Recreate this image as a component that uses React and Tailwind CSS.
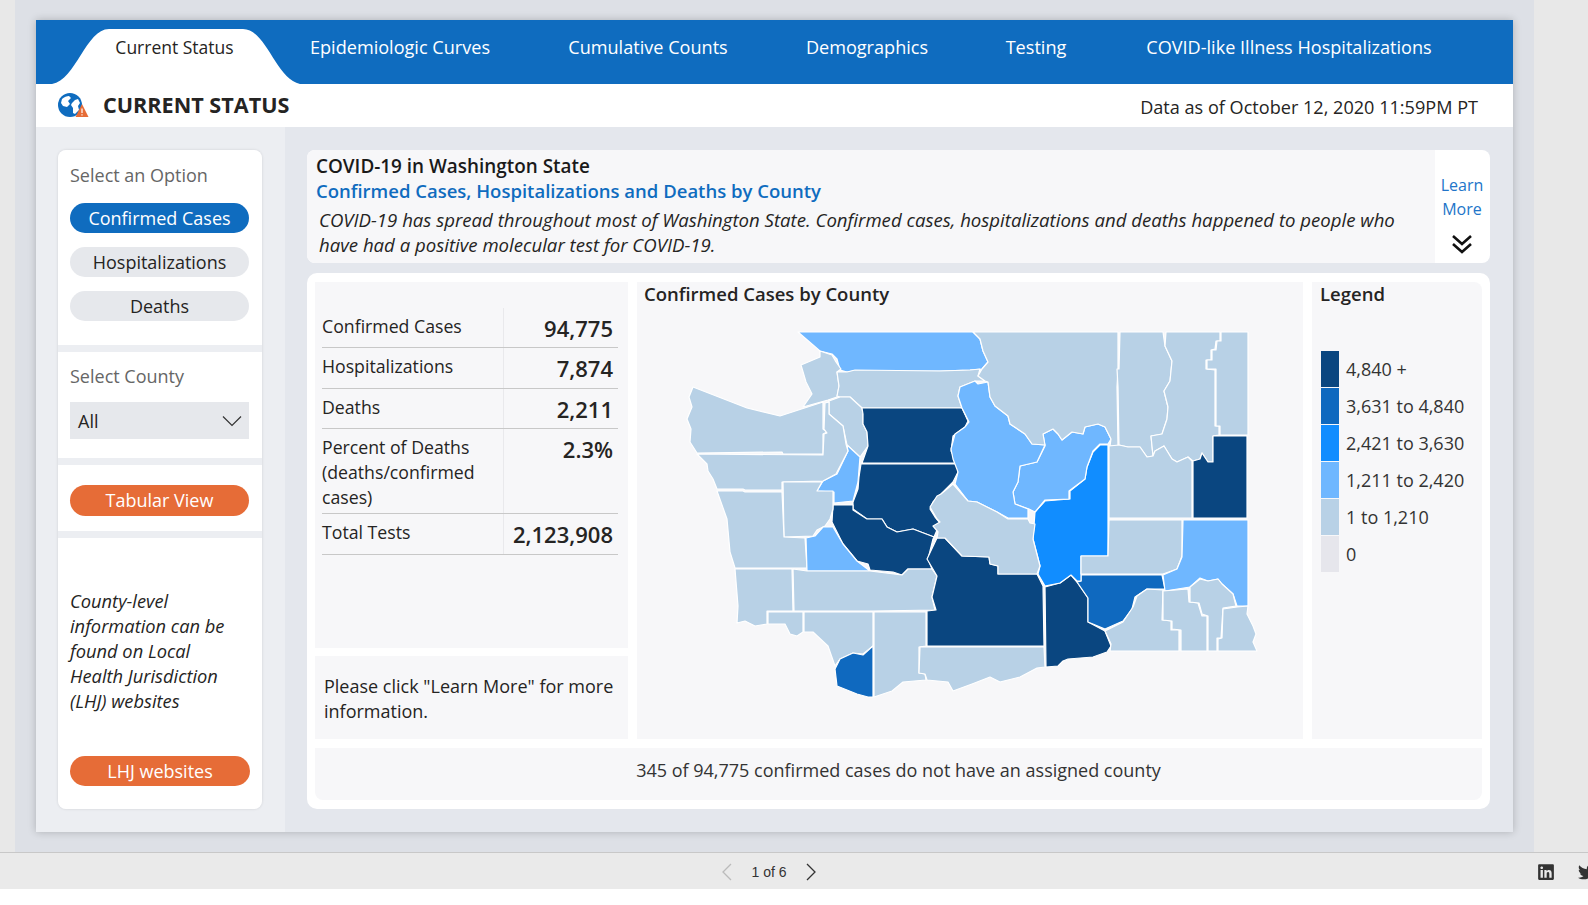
import { FaLinkedin, FaTwitter } from "react-icons/fa";

const DARK = "#0a4680";
const MID = "#0f69bf";
const BRIGHT = "#118dff";
const LIGHT = "#6fb7ff";
const PALE = "#b8d1e6";

const counties = [
  [LIGHT, "798,333 973,333 980,340 983,352 988,363 982,370 970,371 940,372 853,372 847,373 840,371 837,360 832,355 820,352"],
  [PALE, "801,366 820,358 820,352 832,356 836,363 841,370 837,373 839,387 837,398 828,401 803,408 812,395 806,383"],
  [PALE, "837,373 847,373 855,371 940,372 970,371 980,370 978,377 985,382 975,382 960,388 958,397 962,409 862,409 850,398 840,398 837,397 839,387"],
  [PALE, "829,402 840,398 850,398 862,409 863,415 863,425 867,433 868,447 860,458 847,446 843,427 829,415"],
  [DARK, "862,409 962,409 968,422 965,428 953,437 951,452 957,464 862,464 868,447 867,433 863,425 863,415"],
  [DARK, "861,465 957,465 958,473 953,483 941,495 933,503 930,510 935,518 940,524 934,538 913,530 897,533 887,528 882,520 867,520 853,510 853,503 858,490 859,478"],
  [DARK, "833,506 853,506 853,511 867,520 882,520 887,528 897,533 913,530 934,538 933,540 928,560 932,570 908,570 902,576 893,573 870,571 868,565 857,562 843,545 832,523"],
  [LIGHT, "847,446 860,458 858,483 853,502 834,504 834,493 817,492 823,482 837,475 848,452"],
  [PALE, "693,388 747,409 780,417 823,403 823,430 827,433 823,435 823,455 783,455 782,453 697,454 690,443 691,430 687,420 692,408 689,398"],
  [PALE, "697,455 823,456 824,435 827,434 824,430 825,404 829,403 829,415 843,427 846,445 848,452 836,475 823,482 782,483 782,491 745,491 743,490 717,490 713,480 708,472 707,465"],
  [PALE, "783,483 822,483 817,492 833,492 833,510 830,520 825,527 817,531 813,537 784,538"],
  [PALE, "717,492 743,492 745,493 782,493 784,538 805,539 807,569 735,569 730,553 727,520"],
  [LIGHT, "806,539 815,537 823,528 833,528 843,545 857,562 870,572 807,572"],
  [PALE, "735,570 792,570 793,612 767,612 767,625 755,627 745,622 737,624 738,607"],
  [PALE, "793,570 807,572 870,572 902,576 908,570 932,570 937,577 932,598 935,611 873,612 794,612"],
  [PALE, "768,613 803,613 803,633 797,637 790,635 785,625 768,625"],
  [PALE, "804,613 873,613 873,647 863,655 853,654 840,660 835,667 828,647 813,633 804,633"],
  [MID, "873,647 873,698 868,698 857,695 837,687 835,670 840,660 853,654 863,656"],
  [PALE, "874,613 926,613 926,647 919,648 919,674 925,675 926,681 903,683 892,692 874,698"],
  [DARK, "927,612 936,611 932,598 937,577 927,560 937,539 945,539 962,557 989,558 990,565 998,567 998,575 1037,575 1043,587 1044,647 927,647"],
  [PALE, "920,648 1044,648 1045,668 1037,669 1020,678 1000,683 990,678 972,685 953,692 948,683 927,681 925,675 919,674"],
  [DARK, "1045,588 1060,584 1071,576 1077,583 1088,599 1088,623 1105,632 1111,647 1107,653 1093,658 1068,660 1063,662 1058,667 1046,668"],
  [MID, "1081,576 1162,576 1165,590 1147,590 1135,598 1132,610 1123,622 1105,630 1088,623 1088,599 1077,583 1081,582"],
  [BRIGHT, "1108,446 1108,557 1081,557 1081,582 1077,582 1071,576 1060,584 1045,587 1038,575 1040,567 1033,540 1035,513 1045,502 1070,500 1070,492 1085,480 1087,468 1093,453 1100,446"],
  [LIGHT, "1100,445 1093,452 1087,468 1085,480 1069,492 1069,500 1045,501 1035,513 1029,510 1015,505 1013,493 1018,483 1020,467 1037,463 1045,447 1043,435 1053,430 1058,435 1062,441 1072,433 1083,435 1085,428 1098,425 1105,428 1111,440 1108,445"],
  [LIGHT, "960,388 975,382 978,385 988,383 990,398 995,407 1008,417 1010,425 1025,435 1032,445 1045,446 1037,463 1020,467 1018,483 1013,493 1015,505 1028,510 1028,519 1008,519 997,513 977,503 968,502 955,485 958,473 953,460 951,450 955,435 965,428 969,423 962,409 958,397"],
  [PALE, "953,485 968,502 977,503 997,513 1008,520 1028,520 1030,524 1035,525 1033,540 1040,567 1037,575 998,575 998,567 990,565 989,558 962,557 945,539 937,539 938,533 933,527 940,523 937,520 930,508 937,497 941,495"],
  [PALE, "982,333 1118,333 1118,370 1117,388 1118,447 1110,447 1111,440 1105,428 1098,425 1085,428 1083,435 1072,433 1062,441 1058,435 1053,430 1043,435 1045,446 1032,445 1025,435 1010,425 1008,417 995,407 990,398 988,383 985,382 978,377 982,370 988,363 983,352 980,340 973,333"],
  [PALE, "1120,333 1163,333 1165,347 1172,362 1170,382 1164,392 1168,408 1167,420 1162,435 1151,437 1153,457 1147,458 1140,448 1128,448 1119,446 1118,388 1117,370 1119,370"],
  [PALE, "1166,333 1220,333 1220,342 1216,342 1215,350 1211,351 1211,361 1206,361 1206,370 1215,371 1215,427 1219,427 1219,436 1213,437 1213,463 1208,463 1202,454 1200,460 1193,462 1188,458 1177,463 1172,460 1164,447 1155,452 1153,457 1151,437 1162,435 1167,420 1168,408 1164,392 1170,382 1172,362 1165,347"],
  [PALE, "1221,333 1248,333 1248,436 1220,436 1220,427 1216,427 1216,370 1207,370 1207,361 1212,361 1212,351 1216,351 1217,342 1221,342"],
  [DARK, "1213,437 1247,437 1247,519 1193,519 1193,462 1200,460 1202,454 1208,463 1213,463"],
  [PALE, "1109,447 1119,446 1128,448 1140,448 1147,458 1153,457 1155,452 1164,447 1172,460 1177,463 1188,458 1192,462 1192,519 1109,519"],
  [PALE, "1109,521 1182,521 1182,557 1177,570 1163,575 1081,575 1081,557 1108,557"],
  [LIGHT, "1183,521 1248,521 1248,607 1237,607 1233,595 1222,585 1218,580 1208,582 1200,579 1190,588 1165,592 1163,576 1177,570 1182,558"],
  [PALE, "1105,632 1123,623 1133,608 1137,597 1147,590 1163,591 1162,621 1171,622 1171,631 1179,631 1179,652 1110,652 1111,645"],
  [PALE, "1163,592 1188,590 1189,603 1198,604 1202,617 1207,617 1207,652 1181,652 1181,631 1172,630 1172,622 1163,621"],
  [PALE, "1190,588 1200,580 1208,582 1218,580 1222,585 1233,595 1236,607 1223,609 1221,639 1217,639 1217,652 1208,652 1208,617 1202,615 1199,604 1190,603"],
  [PALE, "1223,610 1237,608 1248,607 1247,615 1253,627 1256,635 1253,643 1257,652 1218,652 1218,640 1222,639"],
];

const legend = [
  [DARK, "4,840 +"],
  [MID, "3,631 to 4,840"],
  [BRIGHT, "2,421 to 3,630"],
  [LIGHT, "1,211 to 2,420"],
  [PALE, "1 to 1,210"],
  ["#e6e6ec", "0"],
];

const stats = [
  ["Confirmed Cases", "94,775", "h-[40px]"],
  ["Hospitalizations", "7,874", "h-[41px]"],
  ["Deaths", "2,211", "h-[40px]"],
  ["Percent of Deaths (deaths/confirmed cases)", "2.3%", "h-[85px]"],
  ["Total Tests", "2,123,908", "h-[41px]"],
];

const tabs = [
  ["Epidemiologic Curves", "w-[206px]"],
  ["Cumulative Counts", "w-[290px]"],
  ["Demographics", "w-[148px]"],
  ["Testing", "w-[190px]"],
  ["COVID-like Illness Hospitalizations", "w-[316px]"],
];

function GlobeIcon() {
  return (
    <svg width="32" height="26" viewBox="0 0 32 26">
      <circle cx="13" cy="13" r="12" fill="#0f6cbf" />
      <path d="M5 7c2-2 5-3 7-3l2 2-3 3 2 3-3 3-4-1-2-3zM15 11l3-3 3-1 2 4-2 3 1 4-4 4-2-1 0-5-2-3z" fill="#fff" />
      <path d="M25 12l6.5 13h-13z" fill="#e66c37" />
      <path d="M25 16.5v4.5M25 22.2v1.3" stroke="#fff" strokeWidth="1.2" />
    </svg>
  );
}

function App() {
  return (
    <div className="flex h-screen w-full flex-col overflow-hidden bg-white font-['Open_Sans',sans-serif] text-[#252423]">
      <div className="flex h-[852px] bg-[#e8e8e8]">
        <div className="ml-[15px] h-full w-[1519px] bg-[#dde0e6] pl-[21px] pt-[20px]">
          <div className="flex h-[812px] w-[1477px] flex-col bg-white shadow-[0_0_8px_rgba(0,0,0,0.22)]">
            {/* Tabs */}
            <div className="flex h-[64px] shrink-0 items-end bg-[#0f6cbf] pl-[16px] text-white">
              <div className="relative flex h-[55px] w-[245px] justify-center pt-[5px] text-[17.5px] text-[#252423]">
                <svg className="absolute left-0 top-0" width="248" height="55" viewBox="0 0 248 55">
                  <path d="M0 55C24 51 34 0 57 0H191C214 0 224 50 248 55Z" fill="#fff" />
                </svg>
                <span className="relative">Current Status</span>
              </div>
              {tabs.map(([label, width]) => (
                <div key={label} className={`${width} flex h-[55px] justify-center pt-[5px] text-[18.1px]`}>
                  {label}
                </div>
              ))}
            </div>

            {/* Title row */}
            <div className="flex h-[43px] shrink-0 items-center justify-between pl-[21px] pr-[35px]">
              <div className="flex items-center gap-[14px]">
                <GlobeIcon />
                <span className="text-[21.6px] font-bold">CURRENT STATUS</span>
              </div>
              <span className="pt-[5px] text-[18.1px]">Data as of October 12, 2020 11:59PM PT</span>
            </div>

            <div className="flex flex-1">
              {/* Sidebar */}
              <div className="flex w-[249px] shrink-0 bg-[#eceef2] pl-[22px] pt-[23px]">
                <div className="flex h-[659px] w-[204px] flex-col gap-[7px] overflow-hidden rounded-[8px] shadow-[0_0_3px_rgba(0,0,0,0.12)]">
                  <div className="h-[195px] bg-white px-[12px] pt-[12px]">
                    <p className="text-[18px] text-[#666]">Select an Option</p>
                    <div className="mt-[14px] flex flex-col gap-[14px] text-[18px]">
                      <div className="flex h-[30px] w-[179px] items-center justify-center rounded-full bg-[#0f6cbf] text-white">Confirmed Cases</div>
                      <div className="flex h-[30px] w-[179px] items-center justify-center rounded-full bg-[#e6e8ec]">Hospitalizations</div>
                      <div className="flex h-[30px] w-[179px] items-center justify-center rounded-full bg-[#e6e8ec]">Deaths</div>
                    </div>
                  </div>
                  <div className="h-[106px] bg-white px-[12px] pt-[11px]">
                    <p className="text-[18px] text-[#666]">Select County</p>
                    <div className="mt-[12px] flex h-[37px] w-[179px] items-center justify-between bg-[#e6e8ec] pl-[8px] pr-[7px] pt-[2px] text-[18px]">
                      All
                      <svg className="-mt-[2px]" width="20" height="12" viewBox="0 0 20 12" fill="none" stroke="#333" strokeWidth="1.2">
                        <path d="M1 1.5l9 9 9-9" />
                      </svg>
                    </div>
                  </div>
                  <div className="flex h-[66px] items-center bg-white px-[12px] pt-[4px]">
                    <div className="flex h-[31px] w-[179px] items-center justify-center rounded-full bg-[#e66c37] text-[18px] text-white">Tabular View</div>
                  </div>
                  <div className="flex-1 bg-white pl-[12px] pr-[20px] pt-[50px]">
                    <p className="text-[18.3px] italic leading-[25px]">
                      County-level information can be found on Local Health Jurisdiction (LHJ) websites
                    </p>
                    <div className="mt-[43px] flex h-[30px] w-[180px] items-center justify-center rounded-full bg-[#e66c37] text-[18px] text-white">LHJ websites</div>
                  </div>
                </div>
              </div>

              {/* Main */}
              <div className="flex flex-1 flex-col gap-[10px] bg-[#e4e7ed] pl-[22px] pr-[23px] pt-[23px]">
                <div className="flex h-[113px] overflow-hidden rounded-[8px] bg-white">
                  <div className="flex-1 bg-[#f7f7f9] pl-[9px] pt-[4px]">
                    <p className="text-[18.9px] font-semibold leading-[24px] text-[#1a1a1a]">COVID-19 in Washington State</p>
                    <p className="text-[18.5px] font-semibold leading-[25px] text-[#0f6cbf]">Confirmed Cases, Hospitalizations and Deaths by County</p>
                    <p className="mt-[4px] pl-[3px] pr-[20px] text-[18.6px] italic leading-[25px]">
                      COVID-19 has spread throughout most of Washington State. Confirmed cases, hospitalizations and deaths happened to people who have had a positive molecular test for COVID-19.
                    </p>
                  </div>
                  <div className="flex w-[55px] flex-col items-center pr-[1px] pt-[23px] text-[16px] leading-[24px] text-[#2275c9]">
                    <span>Learn</span>
                    <span>More</span>
                    <svg className="mt-[13px]" width="22" height="20" viewBox="0 0 22 20" fill="none" stroke="#111" strokeWidth="2.6">
                      <path d="M2 2l9 8 9-8M2 10l9 8 9-8" />
                    </svg>
                  </div>
                </div>

                <div className="flex h-[536px] flex-col gap-[9px] rounded-[10px] bg-white px-[8px] py-[9px]">
                  <div className="flex h-[457px] gap-[9px]">
                    <div className="flex w-[313px] flex-col gap-[8px]">
                      <div className="h-[366px] bg-[#f7f7f9] pl-[7px] pr-[10px] pt-[26px]">
                        {stats.map(([label, value, height]) => (
                          <div key={label} className={`${height} flex border-b border-[#c8c8c8]`}>
                            <div className="w-[182px] border-r border-[#e9e9ec] pr-[16px] pt-[6px] text-[17.7px] leading-[25px]">{label}</div>
                            <div className="flex-1 pr-[5px] pt-[8px] text-right text-[22px] font-semibold leading-[25px]">{value}</div>
                          </div>
                        ))}
                      </div>
                      <div className="flex-1 bg-[#f7f7f9] pl-[9px] pt-[18px] text-[18px] leading-[25px]">
                        Please click "Learn More" for more information.
                      </div>
                    </div>

                    <div className="w-[666px] bg-[#f7f7f9]">
                      <p className="pl-[7px] text-[18.5px] font-semibold leading-[23px]">Confirmed Cases by County</p>
                      <div className="mt-[24px] flex justify-center">
                        <svg width="580" height="372" viewBox="680 330 580 372">
                          {counties.map(([fill, points], i) => (
                            <polygon key={i} points={points} fill={fill} stroke="#fff" strokeWidth="1.2" strokeLinejoin="round" />
                          ))}
                        </svg>
                      </div>
                    </div>

                    <div className="flex-1 rounded-tr-[8px] bg-[#f7f7f9] pl-[8px]">
                      <p className="text-[18.5px] font-semibold leading-[23px]">Legend</p>
                      <div className="ml-[1px] mt-[46px] flex flex-col gap-[1px]">
                        {legend.map(([color, label]) => (
                          <div key={label} className="flex h-[36px] items-center gap-[7px] text-[18px]">
                            <div className="h-[36px] w-[18px]" style={{ backgroundColor: color }} />
                            <span className="text-[#333]">{label}</span>
                          </div>
                        ))}
                      </div>
                    </div>
                  </div>
                  <div className="flex flex-1 items-center justify-center rounded-b-[8px] bg-[#f7f7f9] pb-[7px] text-[18px] text-[#333]">
                    345 of 94,775 confirmed cases do not have an assigned county
                  </div>
                </div>
              </div>
            </div>
          </div>
        </div>
      </div>

      {/* Footer */}
      <div className="relative flex h-[37px] shrink-0 items-center justify-center gap-[18px] border-t border-[#c8c8c8] bg-[#eaeaea] pr-[50px] pt-[2px] font-['Liberation_Sans',sans-serif] text-[14px] text-[#333]">
        <svg width="12" height="18" viewBox="0 0 12 18" fill="none" stroke="#bbb" strokeWidth="1.3"><path d="M10 1L2 9l8 8" /></svg>
        <span>1 of 6</span>
        <svg width="12" height="18" viewBox="0 0 12 18" fill="none" stroke="#333" strokeWidth="1.3"><path d="M2 1l8 8-8 8" /></svg>
        <div className="absolute left-[1537px] top-[10px] flex gap-[23px] text-[18px] text-[#333]">
          <FaLinkedin />
          <FaTwitter />
        </div>
      </div>
      <div className="flex-1 bg-white" />
    </div>
  );
}

export default App;
